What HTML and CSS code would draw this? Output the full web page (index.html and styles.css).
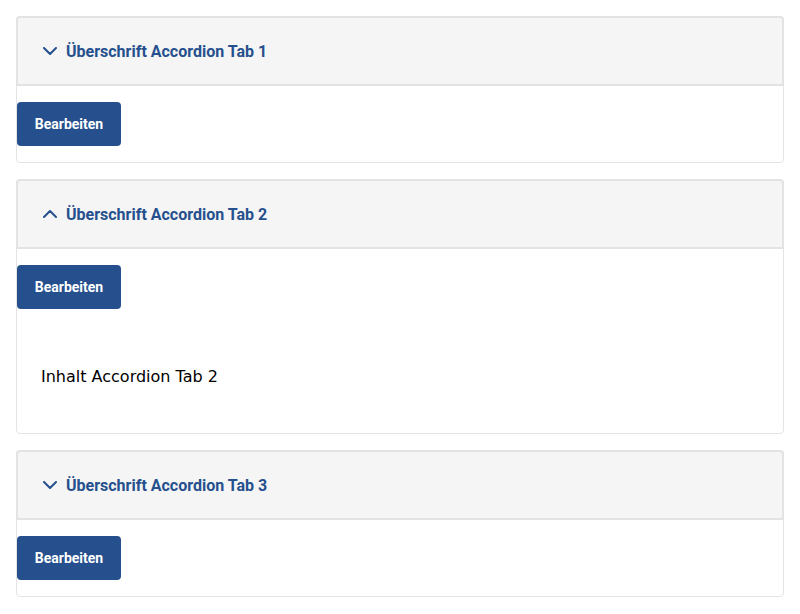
FILE: index.html
```html
<!DOCTYPE html>
<html lang="de">
<head>
<meta charset="utf-8">
<title>Accordion</title>
<link rel="stylesheet" href="styles.css">
</head>
<body>
<div class="accordion">
  <section class="card">
    <div class="card-header">
      <svg class="chev" width="14" height="8" viewBox="0 0 14 8"><polyline points="1,1 7,7 13,1" fill="none" stroke="currentColor" stroke-width="2" stroke-linecap="round" stroke-linejoin="round"/></svg>
      <span>Überschrift Accordion Tab 1</span>
    </div>
    <div class="card-body">
      <button class="btn">Bearbeiten</button>
    </div>
  </section>
  <section class="card">
    <div class="card-header">
      <svg class="chev" width="14" height="8" viewBox="0 0 14 8"><polyline points="1,7 7,1 13,7" fill="none" stroke="currentColor" stroke-width="2" stroke-linecap="round" stroke-linejoin="round"/></svg>
      <span>Überschrift Accordion Tab 2</span>
    </div>
    <div class="card-body">
      <button class="btn">Bearbeiten</button>
      <p class="content">Inhalt Accordion Tab 2</p>
    </div>
  </section>
  <section class="card">
    <div class="card-header">
      <svg class="chev" width="14" height="8" viewBox="0 0 14 8"><polyline points="1,1 7,7 13,1" fill="none" stroke="currentColor" stroke-width="2" stroke-linecap="round" stroke-linejoin="round"/></svg>
      <span>Überschrift Accordion Tab 3</span>
    </div>
    <div class="card-body">
      <button class="btn">Bearbeiten</button>
    </div>
  </section>
</div>
</body>
</html>
```
FILE: styles.css
```css
html, body {
  margin: 0;
  padding: 0;
  background: #ffffff;
}
body {
  font-family: "DejaVu Sans", Verdana, sans-serif;
}
.accordion {
  padding: 16px 16px 0;
  display: flex;
  flex-direction: column;
  gap: 16px;
}
.card {
  border: 1px solid #e4e4e4;
  border-radius: 4px;
  background: #fff;
}
.card-header {
  margin: -1px -1px 0;
  height: 66px;
  border: 2px solid #e3e3e3;
  border-radius: 4px 4px 0 0;
  background: #f5f5f5;
  display: flex;
  align-items: center;
  gap: 9px;
  padding-left: 25px;
  color: #26508d;
  font-family: Roboto, "Liberation Sans", sans-serif;
  font-weight: 700;
  font-size: 16px;
}
.chev {
  display: block;
  flex: none;
}
.card-body {
  padding: 16px 0 16px;
}
.btn {
  display: block;
  width: 104px;
  height: 44px;
  border: none;
  border-radius: 4px;
  background: #26508d;
  color: #fff;
  font-family: Roboto, "Liberation Sans", sans-serif;
  font-weight: 700;
  font-size: 14px;
  padding: 0;
  cursor: pointer;
}
.content {
  margin: 56px 24px 28px;
  font-size: 16px;
  line-height: 24px;
  color: #000;
}
```
